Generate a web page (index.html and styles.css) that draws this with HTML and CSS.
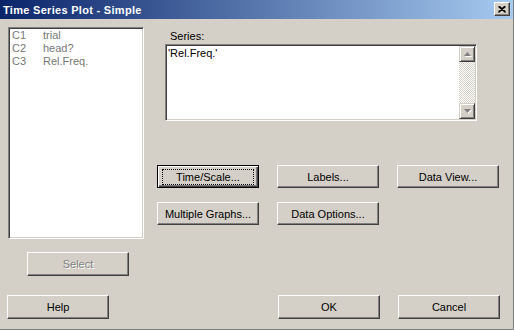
FILE: index.html
```html
<!DOCTYPE html>
<html lang="en">
<head>
    <meta charset="UTF-8">
    <title>Time Series Plot - Simple</title>
    <link rel="stylesheet" href="styles.css">
</head>
<body>

    <div class="window">
        <div class="titlebar">
            <span class="title">Time Series Plot - Simple</span>
            <button class="close-btn">
                <svg width="8" height="7" viewBox="0 0 8 7">
                    <path d="M0.5 0.5 L7.5 6.5 M1.5 0.5 L7.5 5.7 M7.5 0.5 L0.5 6.5 M6.5 0.5 L0.5 5.7" stroke="#000" stroke-width="1.2" fill="none"/>
                </svg>
            </button>
        </div>

        <div class="client">
            <div class="top">
                <div class="left-col">
                    <ul class="var-list">
                        <li><span class="col-id">C1</span><span>trial</span></li>
                        <li><span class="col-id">C2</span><span>head?</span></li>
                        <li><span class="col-id">C3</span><span>Rel.Freq.</span></li>
                    </ul>
                    <button class="btn btn-select" disabled>Select</button>
                </div>

                <div class="right-col">
                    <div class="field-label">Series:</div>
                    <div class="series-box">
                        <div class="series-text">'Rel.Freq.'</div>
                        <div class="scrollbar">
                            <div class="sb-btn">
                                <svg width="7" height="4" viewBox="0 0 7 4"><path d="M3.5 0 L7 4 L0 4 Z" fill="#808080"/></svg>
                            </div>
                            <div class="sb-track"></div>
                            <div class="sb-btn">
                                <svg width="7" height="4" viewBox="0 0 7 4"><path d="M0 0 L7 0 L3.5 4 Z" fill="#808080"/></svg>
                            </div>
                        </div>
                    </div>

                    <div class="btn-row first">
                        <button class="btn btn-default"><span class="focus">Time/Scale...</span></button>
                        <button class="btn">Labels...</button>
                        <button class="btn">Data View...</button>
                    </div>
                    <div class="btn-row">
                        <button class="btn">Multiple Graphs...</button>
                        <button class="btn">Data Options...</button>
                    </div>
                </div>
            </div>

            <div class="bottom-row">
                <button class="btn">Help</button>
                <div class="ok-group">
                    <button class="btn">OK</button>
                    <button class="btn">Cancel</button>
                </div>
            </div>
        </div>
    </div>

</body>
</html>
```

FILE: styles.css
```css
body {
    margin: 0;
    background: #d4d0c8;
    font-family: "Liberation Sans", Arial, sans-serif;
    font-size: 11px;
}

.window {
    width: 514px;
    height: 330px;
    box-sizing: border-box;
    background: #d4d0c8;
    border-right: 1px solid #808080;
    border-bottom: 1px solid #808080;
    box-shadow: 1px 1px 0 #e4e2dc;
    overflow: hidden;
}

.titlebar {
    height: 19px;
    display: flex;
    align-items: center;
    justify-content: space-between;
    padding: 0 3px 0 3px;
    background: linear-gradient(to right, #0a246a, #a6caf0);
}

.title {
    color: white;
    font-weight: bold;
    font-size: 11px;
    letter-spacing: 0.3px;
}

.close-btn {
    width: 16px;
    height: 14px;
    padding: 0;
    margin-top: -1px;
    display: flex;
    align-items: center;
    justify-content: center;
    background: #d4d0c8;
    border: 1px solid;
    border-color: #fff #404040 #404040 #fff;
    box-shadow: inset -1px -1px #808080;
}

.client {
    padding: 8px 0 0 7px;
}

.top {
    display: flex;
    gap: 13px;
}

.left-col {
    width: 137px;
}

.var-list {
    list-style: none;
    margin: 0 0 0 1px;
    width: 136px;
    height: 212px;
    box-sizing: border-box;
    background: white;
    border: 1px solid;
    border-color: #808080 #fff #fff #808080;
    box-shadow: inset 1px 1px #404040, inset -1px -1px #d4d0c8;
    padding: 1px 2px 0 3px;
}

.var-list li {
    height: 13px;
    line-height: 13px;
    color: #777;
    display: flex;
}

.col-id {
    width: 31px;
}

.btn {
    width: 102px;
    height: 24px;
    box-sizing: border-box;
    padding: 0;
    font-family: "Liberation Sans", Arial, sans-serif;
    font-size: 11px;
    color: black;
    background: #d4d0c8;
    border: 1px solid;
    border-color: #fff #404040 #404040 #fff;
    box-shadow: inset -1px -1px #808080;
    text-align: center;
}

.btn-select {
    margin: 13px 0 0 20px;
    color: #808080;
    text-shadow: 1px 1px #fff;
}

.btn-default {
    border: 1px solid #000;
    box-shadow: inset 1px 1px #fff, inset -1px -1px #404040, inset -2px -2px #808080;
    display: flex;
    align-items: center;
    justify-content: center;
}

.focus {
    width: 92px;
    height: 16px;
    line-height: 15px;
    box-sizing: border-box;
    border: 1px dotted #000;
}

.right-col {
    display: flex;
    flex-direction: column;
}

.field-label {
    margin: 2px 0 0 13px;
    height: 14px;
    line-height: 14px;
}

.series-box {
    margin: 1px 0 0 8px;
    width: 312px;
    height: 77px;
    box-sizing: border-box;
    display: flex;
    background: white;
    border: 1px solid;
    border-color: #808080 #fff #fff #808080;
    box-shadow: inset 1px 1px #404040, inset -1px -1px #d4d0c8;
    padding: 1px;
}

.series-text {
    flex: 1;
    padding: 1px 0 0 1px;
    line-height: 13px;
}

.scrollbar {
    width: 16px;
    display: flex;
    flex-direction: column;
}

.sb-btn {
    height: 16px;
    box-sizing: border-box;
    display: flex;
    align-items: center;
    justify-content: center;
    background: #d4d0c8;
    border: 1px solid;
    border-color: #d4d0c8 #404040 #404040 #d4d0c8;
    box-shadow: inset 1px 1px #fff, inset -1px -1px #808080;
}

.sb-btn svg {
    filter: drop-shadow(1px 1px 0 #fff);
}

.sb-track {
    flex: 1;
    background-color: #fff;
    background-image: conic-gradient(#d4d0c8 25%, #fff 0 50%, #d4d0c8 0 75%, #fff 0);
    background-size: 2px 2px;
}

.btn-row {
    display: flex;
    gap: 18px;
    margin-top: 14px;
}

.btn-row.first {
    margin-top: 44px;
}

.btn-row .btn {
    height: 23px;
}

.bottom-row {
    display: flex;
    margin-top: 19px;
}

.ok-group {
    display: flex;
    gap: 18px;
    margin-left: auto;
    margin-right: 13px;
}
```
